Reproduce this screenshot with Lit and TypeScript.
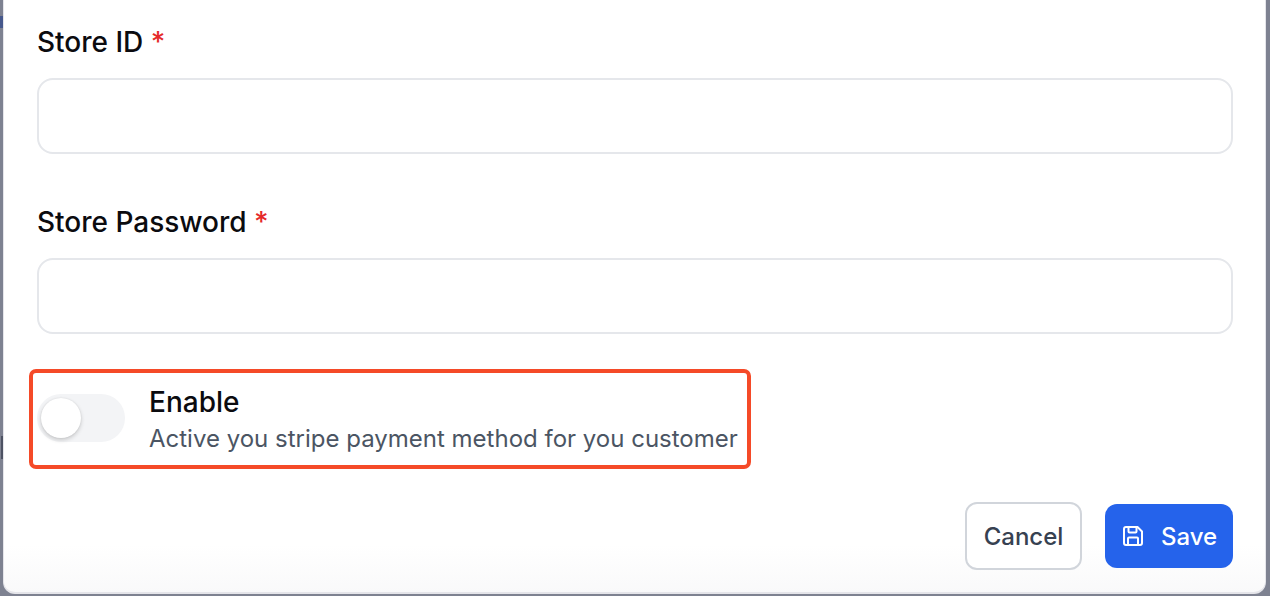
import { LitElement, html, css } from "lit";
import { customElement } from "lit/decorators.js";

@customElement("app-root")
export class AppRoot extends LitElement {
  static styles = css`
    :host { display: block; position: relative; width: 1270px; height: 596px; background: #7e8291; overflow: hidden; font-family: Inter, "Liberation Sans", sans-serif; }
    .blot-blue { position: absolute; left: 0; top: 16px; width: 3px; height: 12px; background: #46588c; }
    .blot-dark { position: absolute; left: 1px; top: 436px; width: 2px; height: 23px; background: #4d5263; }
    .modal { box-sizing: border-box; width: 1263px; height: 594px; margin-left: 3px; background: linear-gradient(to bottom, #fff 0, #fff 545px, #f9f9fa 594px); border: solid #e5e5ea; border-width: 0 1px 2px 1px; border-radius: 0 0 12px 12px; padding: 0 32px 0 33px; display: flex; flex-direction: column; }
    .label { font-size: 28px; line-height: 32px; font-weight: 500; color: #0b0b0f; margin-top: 26px; height: 32px; }
    .star { color: #e52a2a; }
    .input { height: 76px; box-sizing: border-box; border: 2px solid #e5e7eb; border-radius: 16px; background: #fff; margin-top: 20px; }
    .field + .field .label { margin-top: 52px; }
    .highlight { align-self: flex-start; box-sizing: border-box; width: 722px; height: 100px; margin: 35px 0 0 -8px; border: 4px solid #f54a28; border-radius: 7px; display: flex; align-items: center; padding-left: 4px; }
    .track { width: 88px; height: 48px; border-radius: 24px; background: #f3f4f6; position: relative; flex: none; margin-top: -3px; }
    .knob { position: absolute; left: 4px; top: 4px; width: 40px; height: 40px; border-radius: 50%; background: #fff; box-shadow: 0 2px 4px rgba(0,0,0,.18), 0 0 2px rgba(0,0,0,.08); }
    .text { margin: 5px 0 0 24px; }
    .title { font-size: 28px; line-height: 35px; font-weight: 500; color: #0b0b0f; }
    .sub { font-size: 24px; line-height: 38px; color: #4b5563; white-space: nowrap; }
    .actions { display: flex; justify-content: flex-end; align-items: center; gap: 23px; margin-top: 33px; }
    button { font-family: inherit; font-size: 24px; font-weight: 500; box-sizing: border-box; margin: 0; cursor: pointer; display: flex; align-items: center; justify-content: center; }
    .cancel { width: 117px; height: 68px; background: #fff; border: 2px solid #d1d5db; border-radius: 12px; color: #374151; padding: 0; }
    .save { width: 128px; height: 64px; background: #2563eb; border: none; border-radius: 12px; color: #fff; gap: 16px; padding: 0; }
    svg { display: block; }
  `;
  render() {
    return html`<div class="blot-blue"></div><div class="blot-dark"></div><div class="modal">
      <div class="field"><div class="label">Store ID <span class="star">*</span></div><div class="input"></div></div>
      <div class="field"><div class="label">Store Password <span class="star">*</span></div><div class="input"></div></div>
      <div class="highlight">
        <div class="track"><div class="knob"></div></div>
        <div class="text"><div class="title">Enable</div><div class="sub">Active you stripe payment method for you customer</div></div>
      </div>
      <div class="actions">
        <button class="cancel">Cancel</button>
        <button class="save">
          <svg width="24" height="24" viewBox="0 0 24 24" fill="none" stroke="#fff" stroke-width="2" stroke-linejoin="round" stroke-linecap="round"><path d="M5 3h11.5L21 7.5V19a2 2 0 0 1-2 2H5a2 2 0 0 1-2-2V5a2 2 0 0 1 2-2Z"/><path d="M7.5 3v4.5a1 1 0 0 0 1 1h6a1 1 0 0 0 1-1V3"/><path d="M7 21v-6.5a1 1 0 0 1 1-1h8a1 1 0 0 1 1 1V21"/></svg>
          Save
        </button>
      </div>
    </div>`;
  }
}
